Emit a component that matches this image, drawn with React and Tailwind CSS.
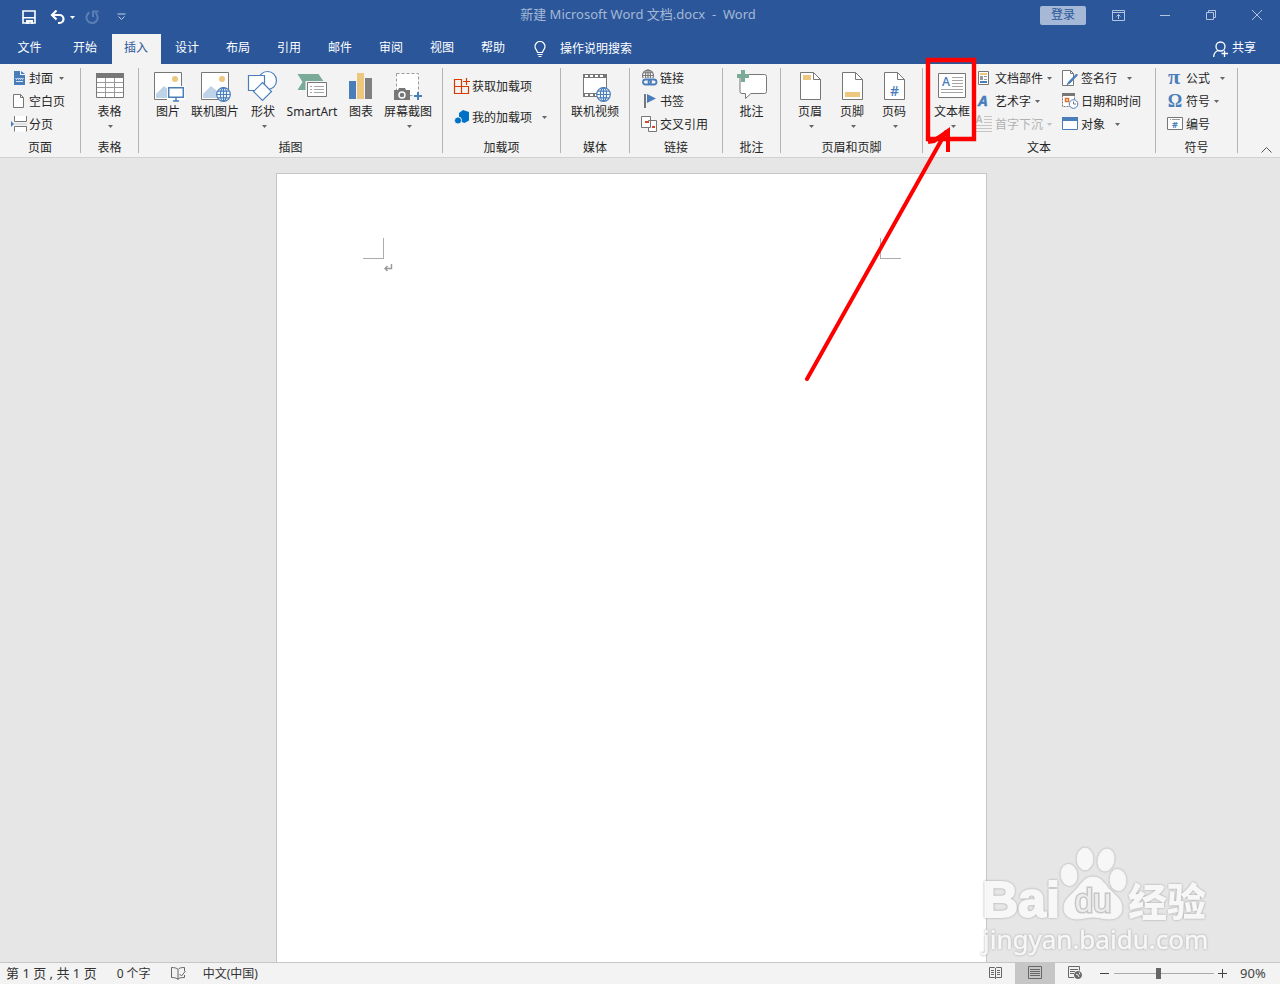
import React, { useState } from 'react';

const GRAY = '#777777';
const BLUE = '#4a7ebb';
const GOLD = '#eec77e';
const GREEN = '#7aaa98';

const tabs = ['文件', '开始', '插入', '设计', '布局', '引用', '邮件', '审阅', '视图', '帮助'];

/* ---------- shared pieces ---------- */

function Caret({ className = '' }) {
  return (
    <svg width="5" height="3" viewBox="0 0 5 3" className={`shrink-0 ${className}`} aria-hidden="true">
      <path d="M0 0h5L2.5 3z" fill="currentColor" />
    </svg>
  );
}

function Group({ label, width, children }) {
  return (
    <section className={`flex h-[85px] shrink-0 flex-col border-r border-[#b4b4b4] ${width}`}>
      <div className="flex flex-1">{children}</div>
      <h2 className="text-center leading-[10px]">{label}</h2>
    </section>
  );
}

function BigButton({ label, icon, width, caret }) {
  return (
    <button className={`flex flex-col items-center self-start pt-1 ${width}`}>
      <svg width="32" height="30" viewBox="0 0 32 30" fill="none" className="shrink-0 overflow-visible" aria-hidden="true">
        {icon}
      </svg>
      <span className="whitespace-nowrap leading-[19px]">{label}</span>
      {caret && <Caret className="ml-0.5 mt-1 text-[#666]" />}
    </button>
  );
}

function SmallButton({ label, icon, caret, caretGap = 'ml-1', gap = 'gap-0.5', disabled }) {
  return (
    <button disabled={disabled} className={`flex h-5 items-center whitespace-nowrap ${gap} ${disabled ? 'text-[#b1b1b1]' : ''}`}>
      <svg width="16" height="16" viewBox="0 0 16 16" fill="none" className="shrink-0 overflow-visible" aria-hidden="true">
        {icon}
      </svg>
      <span className="pt-0.5">{label}</span>
      {caret && <Caret className={`${caretGap} ${disabled ? 'text-[#c0c0c0]' : 'text-[#666]'}`} />}
    </button>
  );
}

function Globe({ cx, cy, r, color = BLUE }) {
  return (
    <g stroke={color} strokeWidth="1.2" transform={`translate(${cx} ${cy})`}>
      <circle r={r} fill="#fff" />
      <ellipse rx={r * 0.45} ry={r} />
      <path d={`M0 ${-r}V${r}M${-r} 0H${r}M${-r * 0.85} ${-r * 0.5}H${r * 0.85}M${-r * 0.85} ${r * 0.5}H${r * 0.85}`} />
    </g>
  );
}

/* ---------- large icons, 32x30 ---------- */

const photo = (
  <>
    <path d="M2.5.5h27v27h-27z" fill="#fff" stroke={GRAY} />
    <circle cx="23" cy="7" r="3" fill={GOLD} />
    <path d="M4 26v-4l8-8 6 5v7z" fill="#bfd3e8" />
  </>
);

const tableIcon = (
  <>
    <path d="M2.5 1.5h27v24h-27z" fill="#fff" stroke={GRAY} />
    <path d="M2 1h28v5H2z" fill={GRAY} />
    <path d="M3 10.5h26M3 15.5h26M3 20.5h26M11.5 6v19M20.5 6v19" stroke="#9a9a9a" />
  </>
);

const pictureIcon = (
  <>
    {photo}
    <path d="M15 14h18v14H15z" fill="#fff" />
    <path d="M16.7 15.7h14.600v9.600H16.700z" fill="#fff" stroke={BLUE} strokeWidth="1.500" />
    <path d="M21 29h6M24 26v3" stroke={BLUE} strokeWidth="1.500" />
  </>
);

const onlinePictureIcon = (
  <>
    {photo}
    <Globe cx={24.5} cy={22.5} r={6.8} />
  </>
);

const shapesIcon = (
  <g stroke={BLUE} strokeWidth="1.2" fill="#fff">
    <circle cx="20.5" cy="8.5" r="9" />
    <path d="M1.5 3.5h16v15h-16z" />
    <path d="M15.5 10.5l9 9-9 9-9-9z" />
  </g>
);

const smartArtIcon = (
  <>
    <path d="M1.500 2H22.500L28 10v8H1.500L6.500 10z" fill={GREEN} />
    <path d="M9.500 9h22v17h-22z" fill="#f3f3f3" />
    <path d="M11.500 10.500h19v14h-19z" fill="#fff" stroke={GRAY} />
    <path d="M14 14.500h2M18 14.500h10M14 17.500h2M18 17.500h10M14 20.500h2M18 20.500h10" stroke="#a5a5a5" />
  </>
);

const chartIcon = (
  <>
    <path d="M4 9h7v18H4z" fill={BLUE} />
    <path d="M12 1h7v26h-7z" fill={GOLD} />
    <path d="M20 6h7v21h-7z" fill="#808080" />
  </>
);

const screenshotIcon = (
  <>
    <path d="M4.500 1.500h22v22h-22z" fill="#fff" stroke="#9a9a9a" strokeDasharray="3 2" />
    <path d="M2 18h4l1-2h6l1 2h4v10H2z" fill={GRAY} />
    <circle cx="10" cy="23" r="3" stroke="#fff" strokeWidth="1.400" />
    <path d="M26 20v8M22 24h8" stroke={BLUE} strokeWidth="2" />
  </>
);

const videoIcon = (
  <>
    <path d="M4.500 2.500h23v22h-23z" fill="#fff" stroke={GRAY} />
    <path d="M4 2h24v4H4zM4 21h24v4H4z" fill={GRAY} />
    <path d="M6 4h20M6 23h20" stroke="#fff" strokeWidth="2" strokeDasharray="3 2" />
    <Globe cx={24.500} cy={22.500} r={6.800} />
  </>
);

const commentIcon = (
  <>
    <path d="M5 2.500h23.500q2 0 2 2v15q0 2-2 2H15l-5.500 5v-5H6q-2 0-2-2V4z" fill="#fff" stroke={GRAY} />
    <path d="M5 -2h4v4h4v4H9v4H5V6H1V2h4z" fill={GREEN} />
  </>
);

function PageShape({ children }) {
  return (
    <>
      <path d="M6.500.5h13l7 7v20h-20z" fill="#fff" stroke={GRAY} />
      <path d="M19.500.5v7h7" stroke={GRAY} />
      {children}
    </>
  );
}

const headerIcon = <PageShape><path d="M9 3h8v5H9z" fill={GOLD} /></PageShape>;
const footerIcon = <PageShape><path d="M9 20h15v5H9z" fill={GOLD} /></PageShape>;
const pageNumberIcon = (
  <PageShape>
    <text x="16.500" y="24" textAnchor="middle" fontSize="14" fontWeight="600" fontFamily="Open Sans" fill={BLUE}>#</text>
  </PageShape>
);

const textBoxIcon = (
  <>
    <path d="M2.500 1.500h27v24h-27z" fill="#fff" stroke={GRAY} />
    <text x="10" y="14" textAnchor="middle" fontSize="12" fontWeight="600" fontFamily="Open Sans" fill={BLUE}>A</text>
    <path d="M16 5.500h11M16 8.500h11M16 11.500h11M16 14.500h11M5 17.500h22M5 20.500h22" stroke="#a5a5a5" />
  </>
);

/* ---------- small icons, 16x16 ---------- */

const coverIcon = (
  <>
    <path d="M3 1h6v4h5v10H3z" fill={BLUE} />
    <path d="M10 1l4 3h-4z" fill={BLUE} />
    <path d="M4.500 8l1 1.500 1-1.500 1 1.500 1-1.500 1 1.500 1-1.500 1 1.500 1-1.500M5 11.500h7" stroke="#fff" strokeWidth=".8" />
  </>
);
const blankIcon = <path d="M2.500 1.500h7l3 3v10h-10zM9.500 1.500v3h3" fill="#fff" stroke={GRAY} />;
const breakIcon = (
  <>
    <path d="M3.500 0v5.500h12V0M3.500 15.500v-5h12v5" fill="#fff" stroke={GRAY} />
    <path d="M0 5l3 3-3 3z" fill={BLUE} />
    <path d="M3 8h13" stroke="#cfcfcf" />
  </>
);
const getAddinIcon = (
  <path d="M.5 1.500h7v7h-7zM.5 8.500h7v7h-7zM7.500 8.500h7v7h-7zM12.500 0v7M9 3.500h7" stroke="#d83b01" strokeWidth="1.200" />
);
const myAddinIcon = (
  <>
    <path d="M9 1l6 2v8.500L10.500 14 5 12V4z" fill="#0072c6" />
    <circle cx="4" cy="11.500" r="3.600" fill="#0072c6" stroke="#f3f3f3" />
  </>
);
const linkIcon = (
  <>
    <Globe cx={7} cy={5.500} r={5.500} color={GRAY} />
    <path d="M1 8h15v8H1z" fill="#f3f3f3" />
    <g stroke={BLUE} strokeWidth="1.800">
      <rect x="2" y="9.500" width="8" height="5" rx="2.500" />
      <rect x="7.500" y="9.500" width="8" height="5" rx="2.500" />
    </g>
  </>
);
const bookmarkIcon = (
  <>
    <path d="M4 1v14" stroke={GRAY} strokeWidth="2" />
    <path d="M6 1l9 4.500L6 10z" fill={BLUE} />
  </>
);
const crossRefIcon = (
  <>
    <path d="M.5.5h9v11h-9z" fill="#fff" stroke={GRAY} />
    <path d="M7.500 4.500h8v11h-8v-4h2v-7z" fill="#fff" stroke={GRAY} />
    <path d="M4 5h4v2H4zM11 10h3v2h-3z" fill="#d9472b" />
  </>
);
const quickPartsIcon = (
  <>
    <path d="M1.500 1.500h10v13h-10z" fill="#fff" stroke={GRAY} />
    <path d="M3 3h7v2H3z" fill={GOLD} />
    <path d="M3 6h3v4H3z" fill="#999" />
    <path d="M7 6.500h3M7 9.500h3" stroke="#999" />
    <path d="M3 11h7v2H3z" fill={BLUE} />
  </>
);
const wordArtIcon = (
  <text x="6" y="13" textAnchor="middle" fontSize="15" fontWeight="700" fontStyle="italic" fontFamily="Open Sans" fill={BLUE} stroke={BLUE} strokeWidth=".5">A</text>
);
const dropCapIcon = (
  <>
    <text x="2" y="7" textAnchor="middle" fontSize="10" fontWeight="600" fill="#b8b8b8">A</text>
    <path d="M7 .5h8M7 3.500h8M7 6.500h8M-1 9.500h16M-1 12.500h16M-1 15.500h16" stroke="#c6c6c6" />
  </>
);
const signatureIcon = (
  <>
    <path d="M.5.500h8l3 3v12H.5z" fill="#fff" stroke={GRAY} />
    <path d="M8.500.5v3h3" stroke={GRAY} />
    <path d="M14.500 4L7 11.500l-2 3 3-1.500L15.500 5z" fill={BLUE} stroke={BLUE} />
  </>
);
const dateIcon = (
  <>
    <path d="M.5 1.500h12v12H.5z" fill="#fff" stroke={GRAY} strokeDasharray="2 1" />
    <path d="M0 0h13v3H0z" fill={GRAY} />
    <path d="M3.500 5.500h3v3h-3z" stroke="#e0702b" strokeWidth="1.500" />
    <circle cx="11.500" cy="11" r="4.300" fill="#fff" stroke={BLUE} />
    <path d="M11.500 8.500V11H14" stroke={GRAY} />
  </>
);
const objectIcon = (
  <>
    <path d="M.5 1.500h15v12H.5z" fill="#fff" stroke={BLUE} />
    <path d="M0 1h16v4H0z" fill={BLUE} />
  </>
);
const equationIcon = (
  <text x="6" y="14" textAnchor="middle" fontSize="22" fontWeight="700" fontFamily="Liberation Serif" fill={BLUE}>π</text>
);
const symbolIcon = (
  <text x="7" y="14" textAnchor="middle" fontSize="18" fontWeight="700" fontFamily="Liberation Serif" fill={BLUE}>Ω</text>
);
const numberIcon = (
  <>
    <path d="M-.5 1.500h15v12h-15z" fill="#fff" stroke={GRAY} />
    <path d="M2 3.500h1M4 3.500h8" stroke="#999" />
    <text x="7" y="12" textAnchor="middle" fontSize="9" fontWeight="700" fill={BLUE}>#</text>
  </>
);

/* ---------- page sections ---------- */

function TitleBar() {
  return (
    <div className="flex h-[34px] items-center justify-between">
      <div className="flex flex-1 items-center pl-[22px] text-white">
        <button aria-label="保存">
          <svg width="14" height="14" viewBox="0 0 14 14" fill="none">
            <path d="M1 1h12v12H1z" stroke="currentColor" strokeWidth="1.600" />
            <path d="M1 7h12v1.500H1zM4 10h7v4H9v-2H7v2H4z" fill="currentColor" />
          </svg>
        </button>
        <button aria-label="撤消" className="ml-[14px] flex items-center gap-1">
          <svg width="16" height="15" viewBox="0 0 16 15" fill="none">
            <path d="M2 5h7.500a4 4 0 0 1 0 8H8" stroke="currentColor" strokeWidth="2.200" />
            <path d="M6.500.5L2 5l4.500 4.500" stroke="currentColor" strokeWidth="2.200" />
          </svg>
          <Caret />
        </button>
        <button aria-label="重复" disabled className="ml-[10px] text-[#5c7fb5]">
          <svg width="15" height="15" viewBox="0 0 15 15" fill="none">
            <path d="M4.500 2.500a5.600 5.600 0 1 0 6 .5" stroke="currentColor" strokeWidth="2" />
            <path d="M8 7V1.500h5.500" stroke="currentColor" strokeWidth="2" />
          </svg>
        </button>
        <button aria-label="自定义快速访问工具栏" className="ml-[17px] text-[#c3d0e5]">
          <svg width="9" height="8" viewBox="0 0 9 8" fill="none">
            <path d="M.5 1h8M1.500 3.500l3 3 3-3" stroke="currentColor" />
          </svg>
        </button>
      </div>
      <h1 className="mb-1 mr-2 whitespace-pre text-[13px] text-[#a5b8d6]">新建 Microsoft Word 文档.docx  -  Word</h1>
      <div className="mb-1 flex flex-1 items-center justify-end pr-[18px] text-[#b4c4de]">
        <button className="h-[19px] rounded-xs bg-[#a5b8d6] px-[11px] text-[#2b579a]">登录</button>
        <button aria-label="功能区显示选项" className="ml-[26px]">
          <svg width="13" height="11" viewBox="0 0 13 11" fill="none" stroke="currentColor">
            <path d="M.5.5h12v10H.5zM.5 2.500h12M6.500 9V4.500M4.500 6.500l2-2 2 2" />
          </svg>
        </button>
        <button aria-label="最小化" className="ml-[35px]">
          <svg width="10" height="10" viewBox="0 0 10 10"><path d="M0 5.500h10" stroke="currentColor" /></svg>
        </button>
        <button aria-label="还原" className="ml-9">
          <svg width="10" height="10" viewBox="0 0 10 10" fill="none" stroke="currentColor">
            <path d="M.5 2.500h7v7h-7zM2.500 2.500v-2h7v7h-2" />
          </svg>
        </button>
        <button aria-label="关闭" className="ml-9">
          <svg width="10" height="10" viewBox="0 0 10 10"><path d="M0 0l10 10M10 0L0 10" stroke="currentColor" /></svg>
        </button>
      </div>
    </div>
  );
}

function TabBar({ active, onSelect }) {
  return (
    <nav className="flex h-[30px] items-stretch text-white">
      <div className="flex gap-0.5">
        {tabs.map((tab, i) => (
          <button
            key={tab}
            onClick={() => onSelect(tab)}
            className={`pb-0.5 ${i === 0 ? 'w-[59px]' : 'w-[49px] pr-px'} ${tab === active ? 'bg-[#f3f3f3] text-[#2b579a]' : ''}`}
          >
            {tab}
          </button>
        ))}
      </div>
      <button className="ml-4 flex items-center gap-[14px]">
        <svg width="12" height="17" viewBox="0 0 12 17" fill="none" stroke="currentColor" strokeWidth="1.200">
          <path d="M3.500 11.500c0-2-2.500-3-2.500-6a5 5 0 0 1 10 0c0 3-2.500 4-2.500 6zM3.500 13.500h5M4.500 15.500h3" />
        </svg>
        操作说明搜索
      </button>
      <button className="ml-auto mr-6 flex items-center gap-1 pb-0.5">
        <svg width="15" height="17" viewBox="0 0 15 17" fill="none" stroke="currentColor" strokeWidth="1.300" className="mt-0.5">
          <circle cx="7.500" cy="5.500" r="4.500" />
          <path d="M.7 16c0-3 1.800-5.500 4.300-6.500M8.500 12.500h6.500M11.500 9.500V16" />
        </svg>
        共享
      </button>
    </nav>
  );
}

// red frame and arrow that point at the text box button
function Callout() {
  return (
    <svg width="180" height="328" viewBox="0 0 180 328" fill="none" stroke="#ff0000" className="pointer-events-none absolute -left-[132px] -top-3" aria-hidden="true">
      <path d="M128 4h46v79h-46z" strokeWidth="4.400" />
      <path d="M7 323L146 76" strokeWidth="4" strokeLinecap="round" />
      <path d="M128 86l6-1 14-10v21" strokeWidth="4" />
      <path d="M131 84l16-9-4 8z" fill="#ff0000" />
    </svg>
  );
}

function Ribbon() {
  return (
    <div className="relative z-10 flex border-b border-[#d2d2d2] bg-[#f3f3f3] py-1">
      <Group label="页面" width="w-[81px]">
        <div className="flex flex-col gap-[3px] pl-[11px]">
          <SmallButton label="封面" icon={coverIcon} caret />
          <SmallButton label="空白页" icon={blankIcon} />
          <SmallButton label="分页" icon={breakIcon} />
        </div>
      </Group>
      <Group label="表格" width="w-[58px]">
        <div className="flex flex-1 justify-center">
          <BigButton label="表格" icon={tableIcon} width="w-10" caret />
        </div>
      </Group>
      <Group label="插图" width="w-[304px]">
        <div className="flex gap-1.5 pl-[13px]">
          <BigButton label="图片" icon={pictureIcon} width="w-8" />
          <BigButton label="联机图片" icon={onlinePictureIcon} width="w-[50px]" />
          <BigButton label="形状" icon={shapesIcon} width="w-[34px]" caret />
          <BigButton label="SmartArt" icon={smartArtIcon} width="w-[52px]" />
          <BigButton label="图表" icon={chartIcon} width="w-[34px]" />
          <BigButton label="屏幕截图" icon={screenshotIcon} width="w-12" caret />
        </div>
      </Group>
      <Group label="加载项" width="w-[118px]">
        <div className="flex flex-col gap-[11px] pl-[11px] pt-2">
          <SmallButton label="获取加载项" icon={getAddinIcon} />
          <SmallButton label="我的加载项" icon={myAddinIcon} caret caretGap="ml-2" />
        </div>
      </Group>
      <Group label="媒体" width="w-[69px]">
        <div className="flex flex-1 justify-center">
          <BigButton label="联机视频" icon={videoIcon} width="w-[50px]" />
        </div>
      </Group>
      <Group label="链接" width="w-[93px]">
        <div className="flex flex-col gap-[3px] pl-[11px]">
          <SmallButton label="链接" icon={linkIcon} gap="gap-[3px]" />
          <SmallButton label="书签" icon={bookmarkIcon} gap="gap-[3px]" />
          <SmallButton label="交叉引用" icon={crossRefIcon} gap="gap-[3px]" />
        </div>
      </Group>
      <Group label="批注" width="w-[58px]">
        <div className="flex flex-1 justify-center">
          <BigButton label="批注" icon={commentIcon} width="w-10" />
        </div>
      </Group>
      <Group label="页眉和页脚" width="w-[142px]">
        <div className="flex pl-2">
          <BigButton label="页眉" icon={headerIcon} width="w-[42px]" caret />
          <BigButton label="页脚" icon={footerIcon} width="w-[42px]" caret />
          <BigButton label="页码" icon={pageNumberIcon} width="w-[42px]" caret />
        </div>
      </Group>
      <Group label="文本" width="w-[233px]">
        <div className="relative ml-[9px]">
          <BigButton label="文本框" icon={textBoxIcon} width="w-10" caret />
          <Callout />
        </div>
        <div className="ml-[5px] flex flex-col gap-[3px]">
          <SmallButton label="文档部件" icon={quickPartsIcon} caret caretGap="ml-0.5" />
          <SmallButton label="艺术字" icon={wordArtIcon} caret caretGap="ml-0.5" />
          <SmallButton label="首字下沉" icon={dropCapIcon} caret caretGap="ml-0.5" disabled />
        </div>
        <div className="ml-2.5 flex flex-col gap-[3px]">
          <SmallButton label="签名行" icon={signatureIcon} gap="gap-[3px]" caret caretGap="ml-[7px]" />
          <SmallButton label="日期和时间" icon={dateIcon} gap="gap-[3px]" />
          <SmallButton label="对象" icon={objectIcon} gap="gap-[3px]" caret caretGap="ml-[7px]" />
        </div>
      </Group>
      <Group label="符号" width="w-[82px]">
        <div className="flex flex-col gap-[3px] pl-3">
          <SmallButton label="公式" icon={equationIcon} caret caretGap="ml-2" />
          <SmallButton label="符号" icon={symbolIcon} caret caretGap="ml-0.5" />
          <SmallButton label="编号" icon={numberIcon} />
        </div>
      </Group>
      <button aria-label="折叠功能区" className="ml-auto mr-2 self-end text-[#555]">
        <svg width="11" height="6" viewBox="0 0 11 6" fill="none"><path d="M.5 5.500l5-5 5 5" stroke="currentColor" /></svg>
      </button>
    </div>
  );
}

function Watermark() {
  return (
    <svg
      width="240"
      height="120"
      viewBox="0 0 240 120"
      className="pointer-events-none absolute bottom-0 right-[62px] opacity-90 drop-shadow-[0_0_1px_#999999]"
      aria-hidden="true"
    >
      <g fill="#f9f9f9" stroke="#f9f9f9">
        <text x="4" y="75" fontFamily="Liberation Sans" fontWeight="700" fontSize="50" strokeWidth="2">Bai</text>
        <ellipse cx="91" cy="33" rx="8" ry="10.500" transform="rotate(-8 91 33)" />
        <ellipse cx="107" cy="17" rx="8" ry="11" />
        <ellipse cx="128" cy="18" rx="8" ry="11" transform="rotate(12 128 18)" />
        <ellipse cx="140" cy="38" rx="8" ry="10.500" transform="rotate(-5 140 38)" />
        <path d="M115 35c9 0 12 8 18 14 6 5 11 10 11 17 0 8-6 11-13 11-6 0-10-2-16-2s-11 2-16 2c-8 0-13-4-13-11 0-8 6-12 11-17 6-6 9-14 18-14z" />
        <text x="115" y="70" textAnchor="middle" fontFamily="Liberation Sans" fontSize="33" fill="#ededed" stroke="#c4c4c4" strokeWidth="3" paintOrder="stroke">du</text>
        <text x="150" y="74" fontFamily="Noto Sans CJK SC" fontWeight="900" fontSize="39" strokeWidth="0">经验</text>
        <text x="5" y="107" fontFamily="Noto Sans" fontSize="26" strokeWidth=".5">jingyan.baidu.com</text>
      </g>
    </svg>
  );
}

function Workspace() {
  return (
    <main className="relative flex min-h-0 flex-1 justify-center overflow-hidden bg-[#e6e6e6] pr-[17px] pt-[15px]">
      <article className="w-[711px] border border-b-0 border-[#c6c6c6] bg-white pl-[86px] pr-[85px] pt-16">
        <div className="flex justify-between">
          <div className="size-[21px] border-b border-r border-[#ababab]" />
          <div className="size-[21px] border-b border-l border-[#ababab]" />
        </div>
        <svg width="9" height="8" viewBox="0 0 9 8" fill="none" stroke="#999" strokeWidth="1.400" className="ml-[21px] mt-[5px]" aria-hidden="true">
          <path d="M7.500 0v4.500H1M3.500 2L1 4.500 3.500 7" />
        </svg>
      </article>
      <Watermark />
    </main>
  );
}

function StatusBar() {
  const [zoom, setZoom] = useState(90);
  return (
    <footer className="flex h-[22px] shrink-0 items-stretch border-t border-[#c6c6c6] bg-[#f3f3f3] text-[#333]">
      <div className="flex items-center pl-1.5">
        <span className="text-[13px]">第 1 页 , 共 1 页</span>
        <span className="ml-5">0 个字</span>
        <button aria-label="校对" className="ml-5">
          <svg width="15" height="13" viewBox="0 0 15 13" fill="none" stroke="#666">
            <path d="M7 2.500C6 1 3 .5.5.5v10c2.500 0 5.500.5 6.500 2zM7 2.500C8 1 10 .5 13.500.5V4M7 12c1-1 3-1.500 6.500-1.500V8M8.500 7l2 2 4-5" />
          </svg>
        </button>
        <span className="ml-[17px]">中文(中国)</span>
      </div>
      <div className="ml-auto flex items-stretch text-[#666]">
        <button aria-label="阅读视图" className="flex w-10 items-center justify-center pb-0.5">
          <svg width="13" height="12" viewBox="0 0 13 12" fill="none" stroke="currentColor">
            <path d="M.5.5h5l1 1 1-1h5v10h-5l-1 1-1-1h-5zM6.500 1v11M2 3.500h3M2 5.500h3M2 7.500h3M8 3.500h3M8 5.500h3M8 7.500h3" />
          </svg>
        </button>
        <button aria-label="页面视图" className="flex w-10 items-center justify-center bg-[#c6c6c6] pb-0.5">
          <svg width="14" height="13" viewBox="0 0 14 13" fill="none" stroke="currentColor">
            <path d="M.5.5h13v12H.5zM2 3.500h10M2 5.500h10M2 7.500h10M2 9.500h10" />
          </svg>
        </button>
        <button aria-label="Web 版式视图" className="flex w-10 items-center justify-center pb-0.5">
          <svg width="14" height="13" viewBox="0 0 14 13" fill="none" stroke="currentColor">
            <path d="M6 11.500H.5V.5h11v4M2 3.500h8M2 5.500h5M2 7.500h4" />
            <circle cx="10" cy="9" r="3.500" fill="currentColor" />
            <path d="M8 8l2 1 1 2M11 6.500l1 2" stroke="#f3f3f3" />
          </svg>
        </button>
        <div className="flex items-center pl-[5px] text-[#444]">
          <button aria-label="缩小" onClick={() => setZoom(Math.max(10, zoom - 10))}>
            <svg width="9" height="9" viewBox="0 0 9 9"><path d="M0 4.500h9" stroke="currentColor" /></svg>
          </button>
          <input
            type="range"
            aria-label="缩放"
            min="10"
            max="190"
            value={zoom}
            onChange={(e) => setZoom(Number(e.target.value))}
            className="ml-[5px] h-3 w-[100px] appearance-none bg-linear-to-b from-[#ababab] to-[#ababab] bg-[length:100%_1px,1px_5px] bg-center bg-no-repeat [&::-webkit-slider-thumb]:h-[11px] [&::-webkit-slider-thumb]:w-[5px] [&::-webkit-slider-thumb]:appearance-none [&::-webkit-slider-thumb]:bg-[#666]"
          />
          <button aria-label="放大" onClick={() => setZoom(Math.min(190, zoom + 10))} className="ml-1">
            <svg width="9" height="9" viewBox="0 0 9 9"><path d="M0 4.500h9M4.500 0v9" stroke="currentColor" /></svg>
          </button>
          <span className="ml-[13px] w-10 text-[13px]">{zoom}%</span>
        </div>
      </div>
    </footer>
  );
}

export default function App() {
  const [active, setActive] = useState('插入');

  return (
    <div className="flex h-screen flex-col overflow-hidden font-['Noto_Sans','Noto_Sans_CJK_SC',sans-serif] text-xs text-[#262626]">
      <header className="shrink-0 bg-[#2b579a]">
        <TitleBar />
        <TabBar active={active} onSelect={setActive} />
        <Ribbon />
      </header>
      <Workspace />
      <StatusBar />
    </div>
  );
}
